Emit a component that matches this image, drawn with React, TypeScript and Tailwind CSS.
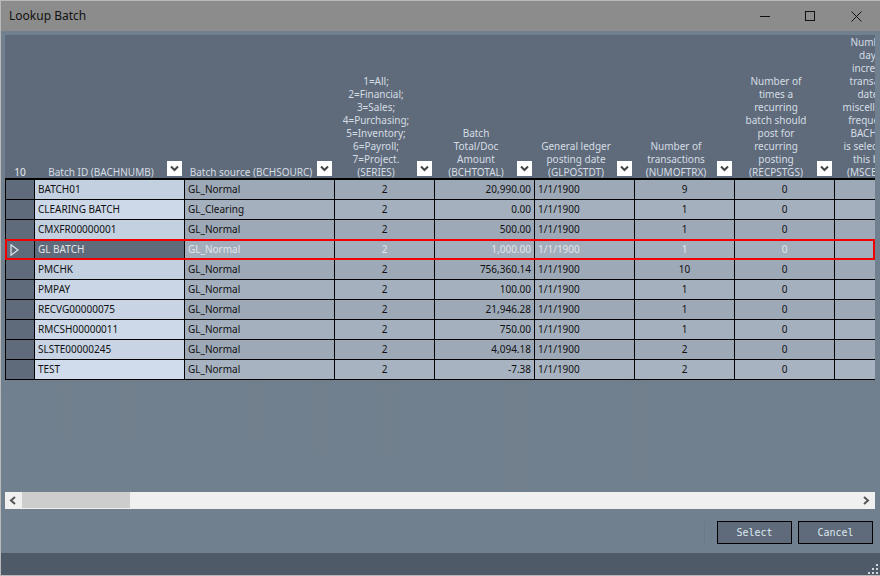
const columns = [
  { width: 'w-[150px]', lines: ['Batch ID (BACHNUMB)'] },
  { width: 'w-[150px]', lines: ['Batch source (BCHSOURC)'] },
  { width: 'w-[100px]', lines: ['1=All;', '2=Financial;', '3=Sales;', '4=Purchasing;', '5=Inventory;', '6=Payroll;', '7=Project.', '(SERIES)'] },
  { width: 'w-[100px]', lines: ['Batch', 'Total/Doc', 'Amount', '(BCHTOTAL)'] },
  { width: 'w-[100px]', lines: ['General ledger', 'posting date', '(GLPOSTDT)'] },
  { width: 'w-[100px]', lines: ['Number of', 'transactions', '(NUMOFTRX)'] },
  { width: 'w-[100px]', lines: ['Number of', 'times a', 'recurring', 'batch should', 'post for', 'recurring', 'posting', '(RECPSTGS)'] },
];

const lastHeader = ['Number of', 'days to', 'increment', 'transaction', 'date for', 'miscellaneous', 'frequency if', 'BACHFREQ', 'is selected for', 'this batch', '(MSCBDINC)'];

const rows = [
  { id: 'BATCH01', source: 'GL_Normal', total: '20,990.00', trx: '9', bg1: 'bg-[#c3d0e0]', bg2: 'bg-[#9ea9b8]' },
  { id: 'CLEARING BATCH', source: 'GL_Clearing', total: '0.00', trx: '1', bg1: 'bg-[#cdd9e9]', bg2: 'bg-[#a5b0bf]' },
  { id: 'CMXFR00000001', source: 'GL_Normal', total: '500.00', trx: '1', bg1: 'bg-[#c3d0e0]', bg2: 'bg-[#9ea9b8]' },
  { id: 'GL BATCH', source: 'GL_Normal', total: '1,000.00', trx: '1', bg1: 'bg-[#5f6b7a]', bg2: 'bg-[#a3aebc]', selected: true },
  { id: 'PMCHK', source: 'GL_Normal', total: '756,360.14', trx: '10', bg1: 'bg-[#c3d0e0]', bg2: 'bg-[#9ea9b8]' },
  { id: 'PMPAY', source: 'GL_Normal', total: '100.00', trx: '1', bg1: 'bg-[#cad6e6]', bg2: 'bg-[#a5b0bf]' },
  { id: 'RECVG00000075', source: 'GL_Normal', total: '21,946.28', trx: '1', bg1: 'bg-[#c8d4e4]', bg2: 'bg-[#9ea9b8]' },
  { id: 'RMCSH00000011', source: 'GL_Normal', total: '750.00', trx: '1', bg1: 'bg-[#cdd9e9]', bg2: 'bg-[#a5b0bf]' },
  { id: 'SLSTE00000245', source: 'GL_Normal', total: '4,094.18', trx: '2', bg1: 'bg-[#c8d4e4]', bg2: 'bg-[#9ea9b8]' },
  { id: 'TEST', source: 'GL_Normal', total: '-7.38', trx: '2', bg1: 'bg-[#d0dcec]', bg2: 'bg-[#a8b3c1]' },
];

// faint ghost bars left under the table in the screenshot
const ghosts = [
  { left: 'left-[55px]', width: 'w-[15px]', height: 'h-[58px]' },
  { left: 'left-[117px]', width: 'w-[16px]', height: 'h-[60px]' },
  { left: 'left-[245px]', width: 'w-[15px]', height: 'h-[60px]' },
  { left: 'left-[310px]', width: 'w-[16px]', height: 'h-[74px]' },
  { left: 'left-[375px]', width: 'w-[16px]', height: 'h-[76px]' },
  { left: 'left-[500px]', width: 'w-[26px]', height: 'h-[110px]' },
  { left: 'left-[625px]', width: 'w-[16px]', height: 'h-[100px]' },
];

function Chevron({ dir }: { dir: 'left' | 'right' }) {
  const d = dir === 'left' ? 'M6 1 L2 4.5 L6 8' : 'M2 1 L6 4.5 L2 8';
  return (
    <svg width="9" height="9" viewBox="0 0 9 9" fill="none" stroke="#555" strokeWidth="2">
      <path d={d} />
    </svg>
  );
}

function HeaderCell({ width, lines }: { width: string; lines: string[] }) {
  return (
    <div className={`relative shrink-0 ${width} h-full`}>
      <div className="flex h-[144px] w-full flex-col items-center justify-end pr-[18px] text-center leading-[13px]">
        {lines.map((line) => (
          <div key={line} className="whitespace-nowrap">{line}</div>
        ))}
      </div>
      <div className="absolute bottom-[2px] right-[3px] flex h-[15px] w-[15px] items-center justify-center bg-white">
        <svg width="9" height="9" viewBox="0 0 9 9" fill="none" stroke="#444" strokeWidth="2">
          <path d="M1 2.5 L4.5 6 L8 2.5" />
        </svg>
      </div>
    </div>
  );
}

function Cell({ className, children }: { className: string; children?: React.ReactNode }) {
  return <div className={`flex h-full shrink-0 items-center border-r border-black ${className}`}>{children}</div>;
}

export default function App() {
  return (
    <div className="flex h-[576px] w-[880px] flex-col overflow-hidden border-t border-l border-b border-[#b9b9b9] bg-[#71808f] font-['Noto_Sans',sans-serif] text-[10px]">
      <div className="flex h-[30px] shrink-0 items-center justify-between bg-[#8c8c8c] pl-[8px] pr-[18px]">
        <span className="text-[12px] text-[#111]">Lookup Batch</span>
        <div className="flex items-center gap-[35px]">
          <svg width="10" height="10" viewBox="0 0 10 10" stroke="#111" fill="none"><path d="M0 5.5 H10" /></svg>
          <svg width="10" height="10" viewBox="0 0 10 10" stroke="#111" fill="none"><rect x="0.5" y="0.5" width="9" height="9" /></svg>
          <svg className="ml-[1px]" width="11" height="11" viewBox="0 0 11 11" stroke="#111" fill="none"><path d="M0.5 0.5 L10.5 10.5 M10.5 0.5 L0.5 10.5" /></svg>
        </div>
      </div>

      <div className="mx-[4px] mt-[4px] flex w-[870px] flex-col">
        <div className="relative h-[474px] overflow-hidden bg-gradient-to-b from-[#5f6b7a] from-[30%] to-[#71808f] to-[75%]">
          {ghosts.map((g) => (
            <div key={g.left} className={`absolute top-[345px] ${g.left} ${g.width} ${g.height} bg-[#7a7f88]/20`} />
          ))}

          <div className="flex h-[143px] text-[#d5dde5]">
            <div className="flex h-[144px] w-[30px] shrink-0 items-end justify-center leading-[13px] text-[#e4eaf0]">10</div>
            {columns.map((col) => (
              <HeaderCell key={col.lines[0] + col.lines.length} width={col.width} lines={col.lines} />
            ))}
            <div className="flex h-[144px] w-[82px] shrink-0 flex-col items-center justify-end text-center leading-[13px]">
              {lastHeader.map((line) => (
                <div key={line} className="whitespace-nowrap">{line}</div>
              ))}
            </div>
          </div>

          <div className="relative w-[870px] border-t-2 border-black text-[#111]">
            {rows.map((row) => (
              <div key={row.id} className={`relative flex h-[20px] border-b border-l border-black ${row.selected ? 'text-[#e2e6eb]' : ''}`}>
                <Cell className="w-[29px] bg-[#5f6b7a] pl-[4px]">
                  {row.selected && (
                    <svg width="9" height="12" viewBox="0 0 9 12" fill="none" stroke="#dfe5eb" strokeWidth="1.2">
                      <path d="M1 0.8 L8 6 L1 11.2 Z" />
                    </svg>
                  )}
                </Cell>
                <Cell className={`w-[150px] pl-[3px] ${row.bg1}`}>{row.id}</Cell>
                <Cell className={`w-[150px] pl-[3px] ${row.bg2}`}>{row.source}</Cell>
                <Cell className={`w-[100px] justify-center ${row.bg2}`}>2</Cell>
                <Cell className={`w-[100px] justify-end pr-[3px] ${row.bg2}`}>{row.total}</Cell>
                <Cell className={`w-[100px] pl-[3px] ${row.bg2}`}>1/1/1900</Cell>
                <Cell className={`w-[100px] justify-center ${row.bg2}`}>{row.trx}</Cell>
                <Cell className={`w-[100px] justify-center ${row.bg2}`}>0</Cell>
                <div className={`h-full flex-1 ${row.bg2}`} />
                {row.selected && <div className="absolute -top-[1px] -left-[1px] h-[21px] w-[870px] border-2 border-[#f00000]" />}
              </div>
            ))}
          </div>

          <div className="absolute bottom-0 left-0 flex h-[17px] w-[870px] items-center justify-between bg-[#f0f0f0] px-[4px]">
            <Chevron dir="left" />
            <Chevron dir="right" />
            <div className="absolute left-[17px] top-0 h-[16px] w-[108px] bg-[#cdcdcd]" />
          </div>
        </div>
      </div>

      <div className="flex flex-1 items-center justify-end gap-[6px] pt-[3px] pr-[7px] font-['DejaVu_Sans_Mono',monospace] text-[10px] text-[#dbe7f0]">
        <div className="mr-[6px] h-[23px] w-[1px] bg-[#687a8c]" />
        <button className="h-[23px] w-[75px] border border-black bg-[#5f6b7a]">Select</button>
        <button className="h-[23px] w-[75px] border border-black bg-[#5f6b7a]">Cancel</button>
      </div>

      <div className="relative h-[22px] shrink-0 bg-[#4f5a68]">
        <svg className="absolute bottom-0 right-[1px]" width="12" height="12" viewBox="0 0 12 12" fill="#cfd6dc">
          <rect x="9" y="1" width="2" height="2" />
          <rect x="5" y="5" width="2" height="2" />
          <rect x="9" y="5" width="2" height="2" />
          <rect x="1" y="9" width="2" height="2" />
          <rect x="5" y="9" width="2" height="2" />
          <rect x="9" y="9" width="2" height="2" />
        </svg>
      </div>
    </div>
  );
}
